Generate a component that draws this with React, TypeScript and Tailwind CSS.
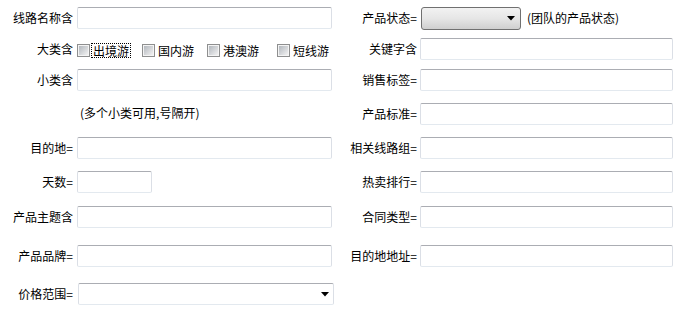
import React from 'react';

const inputCls =
  'h-[22px] bg-white border border-t-[#abadb3] border-x-[#dbdfe6] border-b-[#e3e9ef] rounded-[2px] outline-none';

const Arrow = () => (
  <svg width="8" height="5" viewBox="0 0 8 5" className="shrink-0">
    <path d="M0 0h8L4 4.5z" fill="#000" />
  </svg>
);

const Checkbox: React.FC<{ label: string; focused?: boolean; w?: string }> = ({ label, focused, w }) => (
  <label className={`flex items-center ${w ?? ''}`}>
    <span className="w-[13px] h-[13px] border border-[#8e8f8f] bg-[#f4f4f4] p-[1px] shrink-0">
      <span className="block w-full h-full bg-linear-to-br from-[#b3b8be] to-[#f2f2f2]" />
    </span>
    <span className={`ml-[1px] px-[1px] leading-[13px] ${focused ? 'border border-dotted border-black' : 'border border-transparent'}`}>
      {label}
    </span>
  </label>
);

const Row: React.FC<{
  label?: string;
  left: React.ReactNode;
  rLabel: string;
  right: React.ReactNode;
  mt?: string;
}> = ({ label, left, rLabel, right, mt }) => (
  <div className={`flex items-center h-[22px] ${mt ?? ''}`}>
    <div className="w-[73px] text-right whitespace-nowrap">{label}</div>
    <div className="w-[262px] pl-[4px] flex items-center">{left}</div>
    <div className="w-[82px] text-right whitespace-nowrap">{rLabel}</div>
    <div className="pl-[3px] flex items-center">{right}</div>
  </div>
);

export default function App() {
  return (
    <div className="w-[687px] h-[319px] bg-white text-black text-[12px] font-['Noto_Sans_CJK_SC','Noto_Sans',sans-serif] pt-[7px]">
      <Row
        label="线路名称含"
        left={<input className={`${inputCls} w-[255px]`} />}
        rLabel="产品状态="
        right={
          <>
            <div className="ml-[1px] w-[100px] h-[23px] rounded-[3px] border border-[#707070] bg-linear-to-b from-[#f2f2f2] via-[#e6e6e6] to-[#cfcfcf] flex items-center justify-end pr-[5px]">
              <Arrow />
            </div>
            <span className="ml-[6px]">(团队的产品状态)</span>
          </>
        }
      />
      <Row
        mt="mt-[9px]"
        label="大类含"
        left={
          <div className="flex items-center pt-[3px]">
            <Checkbox label="出境游" focused w="w-[65px]" />
            <Checkbox label="国内游" w="w-[65px]" />
            <Checkbox label="港澳游" w="w-[70px]" />
            <Checkbox label="短线游" />
          </div>
        }
        rLabel="关键字含"
        right={<input className={`${inputCls} w-[253px]`} />}
      />
      <Row
        mt="mt-[9px]"
        label="小类含"
        left={<input className={`${inputCls} w-[255px]`} />}
        rLabel="销售标签="
        right={<input className={`${inputCls} w-[253px]`} />}
      />
      <Row
        mt="mt-[12px]"
        left={<span className="ml-[3px] -mt-[2px]">(多个小类可用,号隔开)</span>}
        rLabel="产品标准="
        right={<input className={`${inputCls} w-[253px]`} />}
      />
      <Row
        mt="mt-[12px]"
        label="目的地="
        left={<input className={`${inputCls} w-[255px]`} />}
        rLabel="相关线路组="
        right={<input className={`${inputCls} w-[253px]`} />}
      />
      <Row
        mt="mt-[12px]"
        label="天数="
        left={<input className={`${inputCls} w-[75px]`} />}
        rLabel="热卖排行="
        right={<input className={`${inputCls} w-[253px]`} />}
      />
      <Row
        mt="mt-[13px]"
        label="产品主题含"
        left={<input className={`${inputCls} w-[255px]`} />}
        rLabel="合同类型="
        right={<input className={`${inputCls} w-[253px]`} />}
      />
      <Row
        mt="mt-[17px]"
        label="产品品牌="
        left={<input className={`${inputCls} w-[255px]`} />}
        rLabel="目的地地址="
        right={<input className={`${inputCls} w-[253px]`} />}
      />
      <Row
        mt="mt-[16px]"
        label="价格范围="
        left={
          <div className={`${inputCls} ml-[1px] w-[256px] flex items-center justify-end pr-[4px]`}>
            <Arrow />
          </div>
        }
        rLabel=""
        right={null}
      />
    </div>
  );
}
